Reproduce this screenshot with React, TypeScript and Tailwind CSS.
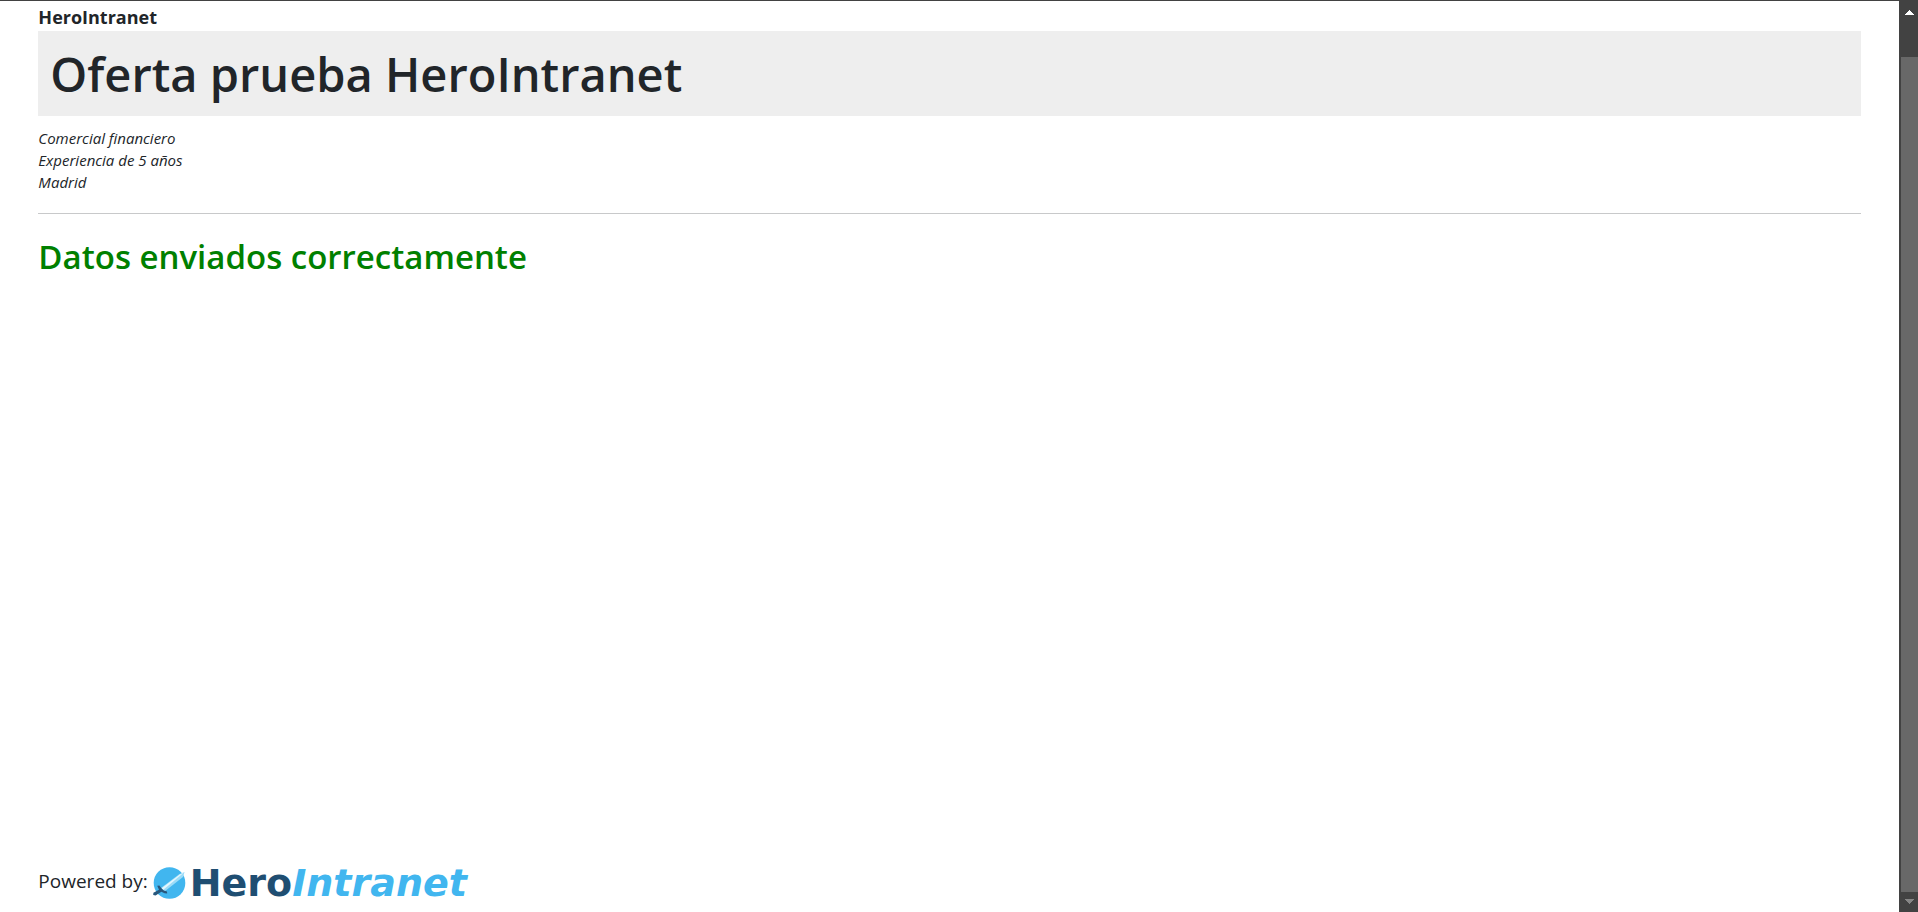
function SwordMark() {
  return (
    <svg viewBox="0 0 34 34" className="h-[34px] w-[34px] shrink-0" aria-hidden="true">
      <circle cx="17.5" cy="17" r="15.8" fill="#41b6ef" />
      <path d="M9 22 L27.5 8 L32.6 6 L31 11 L12.5 25.5 Z" fill="#9bdcf8" />
      <path d="M9.6 22.3 L27.8 8.4 L32 6.6 L11 24 Z" fill="#e4f6fd" />
      <path d="M5.2 19.8 L7.4 19.6 L9.4 22.2 L11.8 24.6 L15 25.6 L15.2 27.4 L12.6 27.2 L9.4 25.8 L3.6 29.6 L1.2 29 L1.4 26.8 L7 23.8 Z" fill="#28577c" />
    </svg>
  );
}

function ScrollRail() {
  return (
    <aside className="flex w-[19px] shrink-0 flex-col bg-[#424242]" aria-hidden="true">
      <div className="flex h-14 justify-center pt-[9px] pl-[2px]">
        <svg viewBox="0 0 9 5" className="h-[5px] w-[9px]" shapeRendering="crispEdges">
          <path d="M0 5 L4.5 0 L9 5 Z" fill="#ffffff" />
        </svg>
      </div>
      <div className="ml-[2px] flex-1 bg-[#686868]" />
      <div className="flex h-5 justify-center pt-[7px] pl-[2px]">
        <svg viewBox="0 0 9 5" className="h-[5px] w-[9px]" shapeRendering="crispEdges">
          <path d="M0 0 L9 0 L4.5 5 Z" fill="#868686" />
        </svg>
      </div>
    </aside>
  );
}

export default function App() {
  return (
    <div className="flex min-h-screen border-t border-[#424242] bg-white font-['Open_Sans','Noto_Sans',sans-serif] text-[#212529]">
      <div className="flex min-w-0 flex-1 flex-col px-[2%]">
        <header>
          <p className="pt-[3px] pb-px text-[18px] leading-[26px] font-bold">HeroIntranet</p>
          <h1 className="bg-[#eeeeee] px-3 pt-[13px] pb-[11px] text-[47px] leading-[61px] font-semibold">
            Oferta prueba HeroIntranet
          </h1>
          <p className="pt-[11px] pb-5 text-[15px] leading-[22px] italic">
            Comercial financiero
            <br />
            Experiencia de 5 años
            <br />
            Madrid
          </p>
          <hr className="border-t border-[#c8c9ca]" />
        </header>
        <main className="flex-1 pt-[22px]">
          <h2 className="text-[33px] leading-[42px] font-semibold text-[#008000]">
            Datos enviados correctamente
          </h2>
        </main>
        <footer className="flex items-center gap-1 pb-3">
          <span className="pb-1 text-[19px] leading-[30px]">Powered by:</span>
          <div className="flex items-center gap-1">
            <SwordMark />
            <span className="font-['DejaVu_Sans',sans-serif] text-[38px] leading-[34px] font-bold text-[#1f4e72]">
              Hero<span className="text-[#41b6ef] italic">Intranet</span>
            </span>
          </div>
        </footer>
      </div>
      <ScrollRail />
    </div>
  );
}
